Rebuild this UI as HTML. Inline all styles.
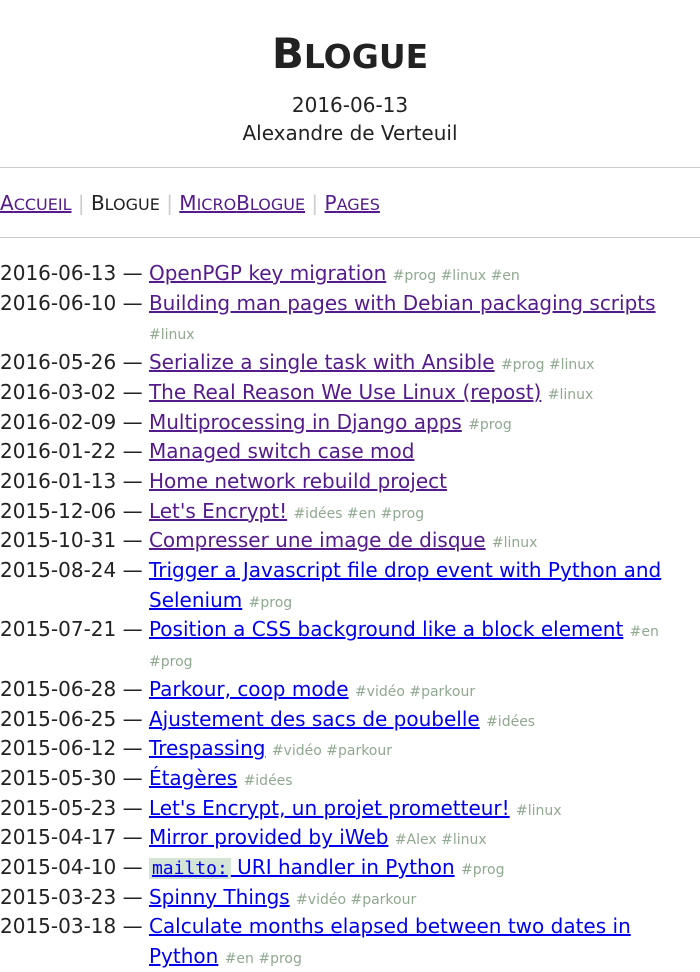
<!DOCTYPE html>
<html><head><meta charset="utf-8">
<style>
html,body{margin:0;padding:0;background:#fff}
body{font-family:"DejaVu Sans",sans-serif;font-size:20px;color:#222;width:700px;overflow:hidden;height:959px}
h1{text-align:center;font-size:42px;font-weight:bold;margin:0;padding-top:30px;line-height:48px;color:#222}
h1 small{font-size:33px}
.meta{text-align:center;line-height:28px;margin-top:10px;font-size:20px}
hr{border:0;border-top:1px solid #ccc;margin:0}
.h1{margin-top:20px}
nav{height:69px;line-height:70px;font-size:20px}
nav small{font-size:16px}
nav .sep{color:#ccc}
a{color:#0000ee}
a.v{color:#551a8b}
ul{list-style:none;margin:0;padding:0;margin-top:21px}
li{padding-left:149px;text-indent:-149px;line-height:29.7px}
.t{font-size:14px;color:#90a890;line-height:10px}
code{font-family:"DejaVu Sans Mono",monospace;background:#d5e5d5;font-size:18px;padding:0 3px;line-height:10px}
</style></head><body>
<h1>B<small>LOGUE</small></h1>
<div class="meta">2016-06-13<br>Alexandre de Verteuil</div>
<hr class="h1">
<nav><a class="v" href="#">A<small>CCUEIL</small></a> <span class="sep">|</span> B<small>LOGUE</small> <span class="sep">|</span> <a class="v" href="#">M<small>ICRO</small>B<small>LOGUE</small></a> <span class="sep">|</span> <a class="v" href="#">P<small>AGES</small></a></nav>
<hr>
<ul>
<li>2016-06-13 — <a class="v" href="#">OpenPGP key migration</a> <span class="t">#prog #linux #en</span></li>
<li>2016-06-10 — <a class="v" href="#">Building man pages with Debian packaging scripts</a> <span class="t">#linux</span></li>
<li>2016-05-26 — <a class="v" href="#">Serialize a single task with Ansible</a> <span class="t">#prog #linux</span></li>
<li>2016-03-02 — <a class="v" href="#">The Real Reason We Use Linux (repost)</a> <span class="t">#linux</span></li>
<li>2016-02-09 — <a class="v" href="#">Multiprocessing in Django apps</a> <span class="t">#prog</span></li>
<li>2016-01-22 — <a class="v" href="#">Managed switch case mod</a></li>
<li>2016-01-13 — <a class="v" href="#">Home network rebuild project</a></li>
<li>2015-12-06 — <a class="v" href="#">Let's Encrypt!</a> <span class="t">#idées #en #prog</span></li>
<li>2015-10-31 — <a class="v" href="#">Compresser une image de disque</a> <span class="t">#linux</span></li>
<li>2015-08-24 — <a href="#">Trigger a Javascript file drop event with Python and Selenium</a> <span class="t">#prog</span></li>
<li>2015-07-21 — <a href="#">Position a CSS background like a block element</a> <span class="t">#en #prog</span></li>
<li>2015-06-28 — <a href="#">Parkour, coop mode</a> <span class="t">#vidéo #parkour</span></li>
<li>2015-06-25 — <a href="#">Ajustement des sacs de poubelle</a> <span class="t">#idées</span></li>
<li>2015-06-12 — <a href="#">Trespassing</a> <span class="t">#vidéo #parkour</span></li>
<li>2015-05-30 — <a href="#">Étagères</a> <span class="t">#idées</span></li>
<li>2015-05-23 — <a href="#">Let's Encrypt, un projet prometteur!</a> <span class="t">#linux</span></li>
<li>2015-04-17 — <a href="#">Mirror provided by iWeb</a> <span class="t">#Alex #linux</span></li>
<li>2015-04-10 — <a href="#"><code>mailto:</code> URI handler in Python</a> <span class="t">#prog</span></li>
<li>2015-03-23 — <a href="#">Spinny Things</a> <span class="t">#vidéo #parkour</span></li>
<li>2015-03-18 — <a href="#">Calculate months elapsed between two dates in Python</a> <span class="t">#en #prog</span></li>
</ul>
</body></html>
